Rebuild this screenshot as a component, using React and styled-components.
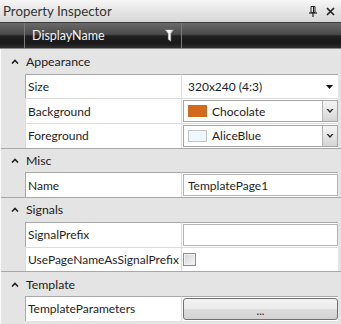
import React from 'react';
import styled, { createGlobalStyle } from 'styled-components';

const GlobalStyle = createGlobalStyle`
  html, body {
    margin: 0;
    padding: 0;
    background: #e4e4e4;
  }
  * {
    box-sizing: border-box;
  }
`;

const Panel = styled.div`
  width: 341px;
  height: 324px;
  overflow: hidden;
  background: #e4e4e4;
  font-family: Lato, "Noto Sans", sans-serif;
  font-size: 12px;
  color: #1e1e1e;
  display: flex;
  flex-direction: column;
`;

const TitleBar = styled.div`
  height: 22px;
  flex: none;
  display: flex;
  align-items: center;
  padding: 0 6px 0 3px;
  background: linear-gradient(#f6f6f6, #e2e2e2 60%, #d8d8d8);
  color: #333;
  font-size: 13.3px;
`;

const Title = styled.div`
  flex: 1;
`;

const TitleIcons = styled.div`
  display: flex;
  align-items: center;
  gap: 9px;
`;

const Header = styled.div`
  height: 27px;
  flex: none;
  display: grid;
  grid-template-columns: 25px 157px 1fr;
  background: linear-gradient(#6a6a6a, #4a4a4a 45%, #202020 52%, #181818 80%, #2e2e2e);
  border-top: 1px solid #3a3a3a;
  border-bottom: 1px solid #888;
`;

const HeaderCell = styled.div`
  display: flex;
  align-items: center;
  padding-left: ${p => (p.$pad ? '7px' : '0')};
  padding-right: 6px;
  color: #f4f4f4;
  border-right: 1px solid #7a7a7a;
  font-size: 12.5px;
  &:last-child {
    border-right: none;
  }
`;

const HeaderLabel = styled.div`
  flex: 1;
`;

const Body = styled.div`
  flex: 1;
  display: flex;
  flex-direction: column;
  border-left: 1px solid #fafafa;
`;

const CategoryRow = styled.div`
  height: 24.7px;
  display: flex;
  align-items: center;
  background: #e4e4e4;
  border-top: ${p => (p.$first ? 'none' : '1px solid #a8a8a8')};
  font-size: 12.3px;
  color: #202020;
`;

const Caret = styled.div`
  width: 25px;
  display: flex;
  justify-content: center;
  padding-left: 2px;
`;

const PropRow = styled.div`
  height: 24.7px;
  display: grid;
  grid-template-columns: 24px 157px 1fr 3px;
`;

const Indent = styled.div`
  background: #e4e4e4;
`;

const NameCell = styled.div`
  background: #fff;
  display: flex;
  align-items: center;
  padding-left: 2px;
  border-top: 1px solid ${p => (p.$first ? '#a8a8a8' : '#dcdcdc')};
  border-left: 1px solid ${p => (p.$first ? '#a8a8a8' : '#dcdcdc')};
  border-right: 1px solid #dcdcdc;
  white-space: nowrap;
  overflow: hidden;
`;

const ValueCell = styled.div`
  background: #fff;
  display: flex;
  align-items: center;
  padding: 1px 0 1px 1px;
  border-top: 1px solid ${p => (p.$first ? '#a8a8a8' : '#dcdcdc')};
`;

const Edge = styled.div`
  background: #e4e4e4;
`;

const PlainSelect = styled.div`
  flex: 1;
  height: 100%;
  display: flex;
  align-items: center;
  padding: 0 5px 0 5px;
`;

const SelectText = styled.div`
  flex: 1;
`;

const ComboBox = styled.div`
  flex: 1;
  height: 100%;
  display: flex;
  align-items: stretch;
  border: 1px solid #a6a6a6;
`;

const ComboValue = styled.div`
  flex: 1;
  display: flex;
  align-items: center;
  gap: 5px;
  padding-left: 4px;
`;

const Swatch = styled.div`
  width: 19px;
  height: 12px;
  background: ${p => p.$color};
  border: 1px solid ${p => p.$border || p.$color};
`;

const DropButton = styled.div`
  width: 15px;
  display: flex;
  align-items: center;
  justify-content: center;
  border-left: 1px solid #b4b4b4;
  background: linear-gradient(#f4f4f4, #e6e6e6 50%, #d4d4d4);
`;

const TextBox = styled.div`
  flex: 1;
  height: 100%;
  display: flex;
  align-items: center;
  padding-left: 4px;
  border: 1px solid #b4b4b4;
`;

const CheckBox = styled.div`
  width: 13px;
  height: 13px;
  border: 1px solid #8e8e8e;
  background: linear-gradient(135deg, #d4d4d4, #f4f4f4);
  box-shadow: inset 0 0 0 1px #f0f0f0;
`;

const EllipsisButton = styled.div`
  flex: 1;
  height: 100%;
  display: flex;
  align-items: flex-end;
  justify-content: center;
  padding-bottom: 3px;
  border: 1px solid #707070;
  border-radius: 3px;
  background: linear-gradient(#f3f3f3, #ebebeb 50%, #dddddd 51%, #d2d2d2);
  font-size: 11px;
  line-height: 11px;
  color: #222;
`;

const CaretIcon = () => (
  <svg width="8" height="5" viewBox="0 0 8 5">
    <polyline points="1,4.5 4,1.5 7,4.5" fill="none" stroke="#222" strokeWidth="1.6" />
  </svg>
);

const ChevronDown = () => (
  <svg width="8" height="6" viewBox="0 0 8 6">
    <polygon points="0.5,1 2.2,1 4,3 5.8,1 7.5,1 4,5" fill="#222" />
  </svg>
);

const TriangleDown = () => (
  <svg width="7" height="4" viewBox="0 0 7 4">
    <polygon points="0,0 7,0 3.5,4" fill="#111" />
  </svg>
);

const PinIcon = () => (
  <svg width="8" height="11" viewBox="0 0 8 11">
    <path d="M2 0.5h4v6h-4z" fill="none" stroke="#222" strokeWidth="1" />
    <path d="M4.5 1v5" stroke="#222" strokeWidth="1" />
    <path d="M0 7h8" stroke="#222" strokeWidth="1.2" />
    <path d="M4 7v4" stroke="#222" strokeWidth="1.2" />
  </svg>
);

const CloseIcon = () => (
  <svg width="9" height="9" viewBox="0 0 9 9">
    <path d="M1 1L8 8M8 1L1 8" stroke="#222" strokeWidth="1.7" />
  </svg>
);

const FilterIcon = () => (
  <svg width="11" height="13" viewBox="0 0 11 13">
    <defs>
      <linearGradient id="fg" x1="0" x2="1">
        <stop offset="0" stopColor="#cfcfcf" />
        <stop offset="0.5" stopColor="#ffffff" />
        <stop offset="1" stopColor="#9a9a9a" />
      </linearGradient>
    </defs>
    <path d="M0.5 0.5h10l-3.5 4v8l-3-2v-6z" fill="url(#fg)" stroke="#555" strokeWidth="0.6" />
  </svg>
);

const categories = [
  {
    name: 'Appearance',
    props: [
      { name: 'Size', kind: 'select', value: '320x240 (4:3)' },
      { name: 'Background', kind: 'color', value: 'Chocolate', color: '#d2691e' },
      { name: 'Foreground', kind: 'color', value: 'AliceBlue', color: '#f0f8ff', border: '#c4c4c4' },
    ],
  },
  {
    name: 'Misc',
    props: [{ name: 'Name', kind: 'text', value: 'TemplatePage1' }],
  },
  {
    name: 'Signals',
    props: [
      { name: 'SignalPrefix', kind: 'text', value: '' },
      { name: 'UsePageNameAsSignalPrefix', kind: 'check' },
    ],
  },
  {
    name: 'Template',
    props: [{ name: 'TemplateParameters', kind: 'button' }],
  },
];

const Editor = ({ prop }) => {
  switch (prop.kind) {
    case 'select':
      return (
        <PlainSelect>
          <SelectText>{prop.value}</SelectText>
          <TriangleDown />
        </PlainSelect>
      );
    case 'color':
      return (
        <ComboBox>
          <ComboValue>
            <Swatch $color={prop.color} $border={prop.border} />
            {prop.value}
          </ComboValue>
          <DropButton>
            <ChevronDown />
          </DropButton>
        </ComboBox>
      );
    case 'text':
      return <TextBox>{prop.value}</TextBox>;
    case 'check':
      return <CheckBox />;
    case 'button':
      return <EllipsisButton>...</EllipsisButton>;
    default:
      return null;
  }
};

const App = () => (
  <>
    <GlobalStyle />
    <Panel>
      <TitleBar>
        <Title>Property Inspector</Title>
        <TitleIcons>
          <PinIcon />
          <CloseIcon />
        </TitleIcons>
      </TitleBar>
      <Header>
        <HeaderCell />
        <HeaderCell $pad>
          <HeaderLabel>DisplayName</HeaderLabel>
          <FilterIcon />
        </HeaderCell>
        <HeaderCell />
      </Header>
      <Body>
        {categories.map((cat, ci) => (
          <React.Fragment key={cat.name}>
            <CategoryRow $first={ci === 0}>
              <Caret>
                <CaretIcon />
              </Caret>
              {cat.name}
            </CategoryRow>
            {cat.props.map((p, pi) => (
              <PropRow key={p.name}>
                <Indent />
                <NameCell $first={pi === 0}>{p.name}</NameCell>
                <ValueCell $first={pi === 0}>
                  <Editor prop={p} />
                </ValueCell>
                <Edge />
              </PropRow>
            ))}
          </React.Fragment>
        ))}
      </Body>
    </Panel>
  </>
);

export default App;
